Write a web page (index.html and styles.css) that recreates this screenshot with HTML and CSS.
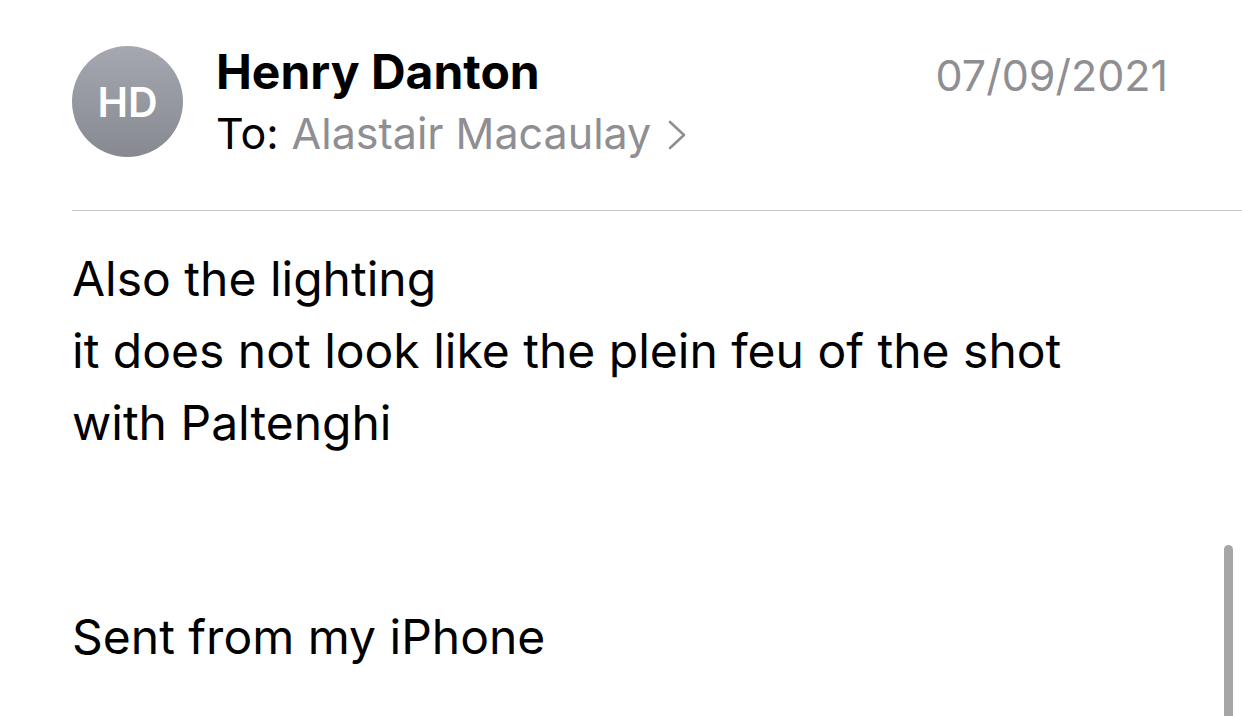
FILE: index.html
```html
<!DOCTYPE html>
<html>
<head>
  <meta charset="utf-8" />
  <title>Mail</title>
  <link rel="stylesheet" href="styles.css">
</head>
<body>
  <div class="message">
    <!-- Header: sender, recipient and date -->
    <div class="header">
      <div class="avatar">HD</div>
      <div class="sender">
        <div class="name">Henry Danton</div>
        <div class="to">
          To: <span class="recipient">Alastair Macaulay</span>
          <svg class="chevron" width="20" height="30" viewBox="0 0 20 30">
            <path d="M3 2 L17 15 L3 28" fill="none" stroke="#8e8e93" stroke-width="2.6" stroke-linecap="round" stroke-linejoin="round"/>
          </svg>
        </div>
      </div>
      <div class="date">07/09/2021</div>
    </div>

    <div class="body">
      <p>Also the lighting<br>
      it does not look like the plein feu of the shot<br>
      with Paltenghi</p>
      <p class="signature">Sent from my iPhone</p>
    </div>
  </div>

  <div class="scrollbar"></div>
</body>
</html>
```

FILE: styles.css
```css
html, body {
  margin: 0;
  padding: 0;
  height: 100%;
  background: #ffffff;
  font-family: Inter, "Noto Sans", sans-serif;
  color: #000;
  overflow: hidden;
}

.message {
  padding-left: 72px;
}

.header {
  display: flex;
  align-items: flex-start;
  padding-top: 46px;
  padding-right: 74px;
  padding-bottom: 49px;
  border-bottom: 1px solid #c8c8cc;
}

.avatar {
  width: 111px;
  height: 111px;
  border-radius: 50%;
  background: linear-gradient(180deg, #a5a8b0 0%, #868990 100%);
  color: #fff;
  font-size: 41px;
  font-weight: 600;
  display: flex;
  align-items: center;
  justify-content: center;
  flex-shrink: 0;
}

.sender {
  flex: 1;
  margin-left: 33px;
}

.name {
  font-size: 48px;
  font-weight: 700;
  line-height: 56px;
  margin-top: -2px;
}

.to {
  font-size: 43px;
  line-height: 56px;
  margin-top: 5px;
  display: flex;
  align-items: center;
}

.recipient {
  color: #8e8e93;
  margin-left: 13px;
}

.chevron {
  margin-left: 16px;
  margin-top: 4px;
}

.date {
  font-size: 43px;
  color: #8e8e93;
  line-height: 56px;
  margin-top: 1px;
}

.body {
  font-size: 48px;
  line-height: 72px;
  padding-top: 32px;
}

.body p {
  margin: 0;
}

.signature {
  margin-top: 142px !important;
}

.scrollbar {
  position: fixed;
  left: 1224px;
  top: 545px;
  width: 9px;
  height: 200px;
  border-radius: 5px;
  background: #a6a6a6;
}
```
